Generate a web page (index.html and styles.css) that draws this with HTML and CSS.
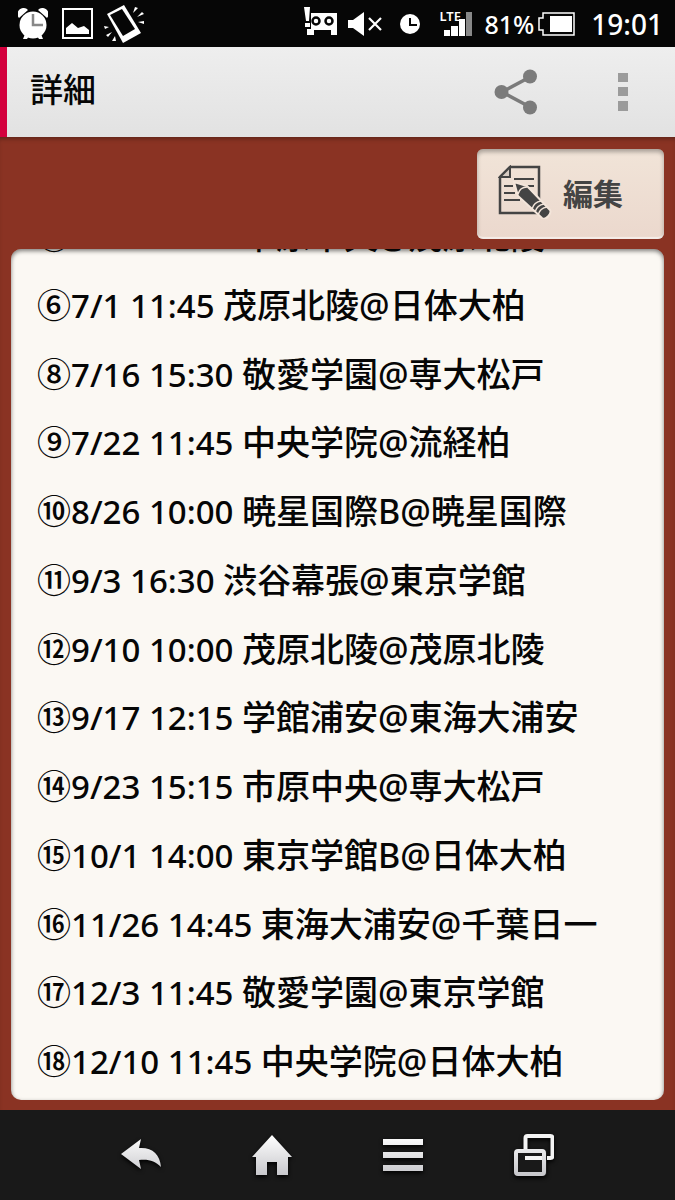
FILE: index.html
```html
<!DOCTYPE html>
<html lang="ja">
<head>
    <meta charset="UTF-8">
    <meta name="viewport" content="width=device-width, initial-scale=1.0">
    <title>詳細</title>
    <link rel="stylesheet" href="styles.css">
</head>
<body>
    <div class="status-bar">
        <div class="status-left">
            <svg width="30" height="32" viewBox="0 0 30 32">
                <g fill="#fff">
                    <circle cx="15" cy="17" r="13.5"/>
                    <path d="M1 10a6 6 0 0 1 9-8z M29 10a6 6 0 0 0-9-8z"/>
                    <path d="M7 26l-2 5h4l2-3z M23 26l2 5h-4l-2-3z"/>
                </g>
                <path d="M15 6v11h10" fill="none" stroke="#888" stroke-width="2.5"/>
            </svg>
            <svg width="31" height="31" viewBox="0 0 31 31">
                <rect x="1" y="1" width="29" height="29" fill="none" stroke="#fff" stroke-width="2"/>
                <path d="M4 26v-6l6-5 6 5 6-2 5 4v4z" fill="#fff"/>
            </svg>
            <svg width="42" height="40" viewBox="0 0 42 40">
                <path d="M4 10L21 1 38 29 20 39z" fill="#fff"/>
                <path d="M7 11L19 5 32 25 20 32z" fill="#060606"/>
                <path d="M30 9l2-6 3 1z M34 13l5-5 2 2z M35 18l6-1v3z M6 23l-5-1 1 3z M9 28l-6 3 2 2z M12 32l-3 5 4 0z" fill="#fff"/>
            </svg>
        </div>
        <div class="status-right">
            <svg class="tape" width="34" height="30" viewBox="0 0 34 30">
                <path d="M0 0h6l-1 14H2z M1 16h5v4H1z M7 6h26v22h-6v-5H10v5H3v-6h4z" fill="#fff"/>
                <g fill="#fff" stroke="#060606" stroke-width="2.5">
                    <circle cx="12" cy="14" r="3.5"/>
                    <circle cx="25" cy="14" r="3.5"/>
                </g>
            </svg>
            <svg class="mute" width="34" height="24" viewBox="0 0 34 24">
                <path d="M0 8h5L16 0v24L5 16H0z" fill="#fff"/>
                <path d="M21 6l12 12M33 6L21 18" stroke="#fff" stroke-width="2.2"/>
            </svg>
            <svg class="clock" width="20" height="20" viewBox="0 0 20 20">
                <circle cx="10" cy="10" r="10" fill="#fff"/>
                <path d="M10 4v7h7" fill="none" stroke="#060606" stroke-width="2"/>
            </svg>
            <div class="signal">
                <span class="lte">LTE</span>
                <svg width="34" height="24" viewBox="0 0 34 24">
                    <path d="M5 18h6v6H5z M12 14h7v10h-7z M20 7h6v17h-6z" fill="#fff"/>
                    <path d="M27 0h6v24h-6z" fill="#888"/>
                </svg>
            </div>
            <span class="percent">81%</span>
            <svg class="battery" width="37" height="24" viewBox="0 0 37 24">
                <path d="M5 1h31v22H5v-5H1V6h4z" fill="none" stroke="#fff" stroke-width="1.5"/>
                <path d="M12 4h22v16H12z" fill="#fff"/>
            </svg>
            <time>19:01</time>
        </div>
    </div>

    <header>
        <h1>詳細</h1>
        <button class="header-button" aria-label="共有">
            <svg width="44" height="46" viewBox="0 0 44 46">
                <path d="M36 8L8 23l28 15" fill="none" stroke="#7b7b7b" stroke-width="3.5"/>
                <g fill="#7b7b7b">
                    <circle cx="36" cy="7.500" r="7"/>
                    <circle cx="7.500" cy="23" r="7"/>
                    <circle cx="36" cy="38.500" r="7"/>
                </g>
            </svg>
        </button>
        <button class="header-button" aria-label="メニュー">
            <svg width="10" height="38" viewBox="0 0 10 38">
                <path d="M0 0h10v9H0z M0 14h10v9H0z M0 28h10v10H0z" fill="#9b9b9b"/>
            </svg>
        </button>
    </header>

    <main>
        <div class="toolbar">
            <button class="edit-button">
                <svg width="54" height="54" viewBox="0 0 54 54">
                    <path d="M12 2h29v46H2V12z" fill="none" stroke="#444" stroke-width="2.500"/>
                    <path d="M2 12L12 2v10z" fill="#d8cdc4" stroke="#444" stroke-width="2"/>
                    <path d="M16 14h20M6 21h9M28 21h8M6 28h11M6 35h16" stroke="#444" stroke-width="2"/>
                    <path d="M16 17l13 4 23 24c2 3-4 11-8 8L20 31z" fill="#444" stroke="#f3e5da" stroke-width="2"/>
                    <path d="M20 29q2-7 9-7M34 44q2-7 9-8M37 47q2-7 9-8M40 50q2-7 9-8" fill="none" stroke="#f3e5da" stroke-width="1.500"/>
                </svg>
                編集
            </button>
        </div>

        <section class="panel">
            <ul class="match-list">
                <li>⑤<span class="date">6/24 10:00 </span>市原中央@茂原北陵</li>
                <li>⑥<span class="date">7/1 11:45 </span>茂原北陵@日体大柏</li>
                <li>⑧<span class="date">7/16 15:30 </span>敬愛学園@専大松戸</li>
                <li>⑨<span class="date">7/22 11:45 </span>中央学院@流経柏</li>
                <li>⑩<span class="date">8/26 10:00 </span>暁星国際B@暁星国際</li>
                <li>⑪<span class="date">9/3 16:30 </span>渋谷幕張@東京学館</li>
                <li>⑫<span class="date">9/10 10:00 </span>茂原北陵@茂原北陵</li>
                <li>⑬<span class="date">9/17 12:15 </span>学館浦安@東海大浦安</li>
                <li>⑭<span class="date">9/23 15:15 </span>市原中央@専大松戸</li>
                <li>⑮<span class="date">10/1 14:00 </span>東京学館B@日体大柏</li>
                <li>⑯<span class="date">11/26 14:45 </span>東海大浦安@千葉日一</li>
                <li>⑰<span class="date">12/3 11:45 </span>敬愛学園@東京学館</li>
                <li>⑱<span class="date">12/10 11:45 </span>中央学院@日体大柏</li>
            </ul>
        </section>
    </main>

    <nav>
        <svg width="0" height="0" class="defs">
            <linearGradient id="silver" x1="0" y1="0" x2="0" y2="40" gradientUnits="userSpaceOnUse">
                <stop offset="0" stop-color="#fff"/>
                <stop offset="1" stop-color="#c8c8cc"/>
            </linearGradient>
        </svg>
        <button aria-label="戻る">
            <svg width="40" height="40" viewBox="0 0 40 40">
                <path d="M0 19L20 4l-2 9c13-1 21 6 22 19-6-6-12-8-22-7l2 9z" fill="url(#silver)"/>
            </svg>
        </button>
        <button aria-label="ホーム">
            <svg width="40" height="40" viewBox="0 0 40 40">
                <path d="M20 0l20 22h-4v18H25V27H15v13H4V22H0z" fill="url(#silver)"/>
            </svg>
        </button>
        <button aria-label="メニュー">
            <svg width="40" height="40" viewBox="0 0 40 40">
                <path d="M0 4h40v6H0z M0 17h40v6H0z M0 30h40v6H0z" fill="url(#silver)"/>
            </svg>
        </button>
        <button aria-label="履歴">
            <svg width="40" height="42" viewBox="0 0 40 42">
                <rect x="11.500" y="2" width="27" height="22" rx="2" fill="none" stroke="#f4f4f4" stroke-width="4"/>
                <rect x="0" y="15" width="33" height="27" rx="4" fill="#191919"/>
                <path d="M11 24h17" stroke="#f4f4f4" stroke-width="4"/>
                <rect x="2" y="17" width="28" height="23" rx="2" fill="none" stroke="url(#silver)" stroke-width="4"/>
            </svg>
        </button>
    </nav>
</body>
</html>
```

FILE: styles.css
```css
* {
    margin: 0;
    padding: 0;
    box-sizing: border-box;
}
:root {
    --brick: #8a3323;
    --paper: #fbf8f3;
    --red: #d3003d;
}
body {
    display: flex;
    flex-direction: column;
    height: 100vh;
    font-family: "Noto Sans", "Noto Sans CJK JP", sans-serif;
    font-weight: 500;
    background-color: var(--brick);
    color: #060606;
}
button {
    border: none;
    background: none;
    font: inherit;
    cursor: pointer;
}
svg {
    display: block;
    flex: none;
}

/* status bar */
.status-bar {
    display: flex;
    justify-content: space-between;
    align-items: center;
    height: 47px;
    padding: 0 12px 0 18px;
    background-color: #060606;
    color: #fff;
    line-height: 40px;
}
.status-left, .status-right {
    display: flex;
    align-items: center;
}
.status-left {
    gap: 14px;
}
.status-left svg:last-child {
    margin-left: -4px;
}
.tape {
    margin-bottom: 4px;
}
.mute {
    margin-left: 10px;
}
.clock {
    margin-left: 18px;
}
.signal {
    position: relative;
    margin-left: 19px;
}
.lte {
    position: absolute;
    top: -3px;
    left: 0;
    font-family: "Noto Sans", sans-serif;
    font-size: 13px;
    font-weight: 600;
    line-height: 14px;
}
.percent {
    margin-left: 11px;
    font-size: 25px;
}
.battery {
    margin-left: 4px;
}
time {
    margin-left: 16px;
    font-size: 28px;
}

/* title bar */
header {
    display: flex;
    align-items: center;
    height: 90px;
    padding-right: 47px;
    border-left: 7px solid var(--red);
    background: linear-gradient(#eee, #e2e2e2);
}
h1 {
    flex: 1;
    padding: 0 0 4px 23px;
    font-size: 33px;
    font-weight: 500;
    line-height: 48px;
}
.header-button + .header-button {
    margin-left: 80px;
}

/* content */
main {
    flex: 1;
    display: flex;
    flex-direction: column;
    min-height: 0;
    padding: 12px 11px 10px;
    box-shadow: inset 0 4px 4px -2px rgba(0, 0, 0, 0.3);
}
.toolbar {
    display: flex;
    justify-content: flex-end;
    margin-bottom: 10px;
}
.edit-button {
    display: flex;
    align-items: center;
    gap: 11px;
    height: 90px;
    padding: 0 41px 4px 21px;
    border-radius: 6px;
    background: linear-gradient(#f1e4d8, #ebd8cd);
    box-shadow: inset 0 3px 4px rgba(0, 0, 0, 0.3), inset 0 -2px 1px rgba(255, 255, 255, 0.6);
    font-size: 30px;
    font-weight: 700;
    color: #444;
}
.panel {
    flex: 1;
    display: flex;
    min-height: 0;
    overflow: hidden;
    border-radius: 10px;
    background-color: var(--paper);
    box-shadow: inset 0 2px 4px rgba(0, 0, 0, 0.5);
}
.match-list {
    flex: 1;
    display: flex;
    flex-direction: column;
    margin-top: -47px;
    padding: 0 26px 4px;
    list-style: none;
    font-size: 34px;
    line-height: 48px;
    white-space: pre;
}
.match-list li {
    flex: 1;
    padding-top: 10px;
}
.date {
    font-size: 33px;
}

/* navigation keys */
nav {
    display: flex;
    justify-content: center;
    align-items: center;
    gap: 91px;
    height: 90px;
    background-color: #191919;
}
nav svg {
    filter: drop-shadow(0 2px 2px #000);
}
.defs {
    position: absolute;
}
```
